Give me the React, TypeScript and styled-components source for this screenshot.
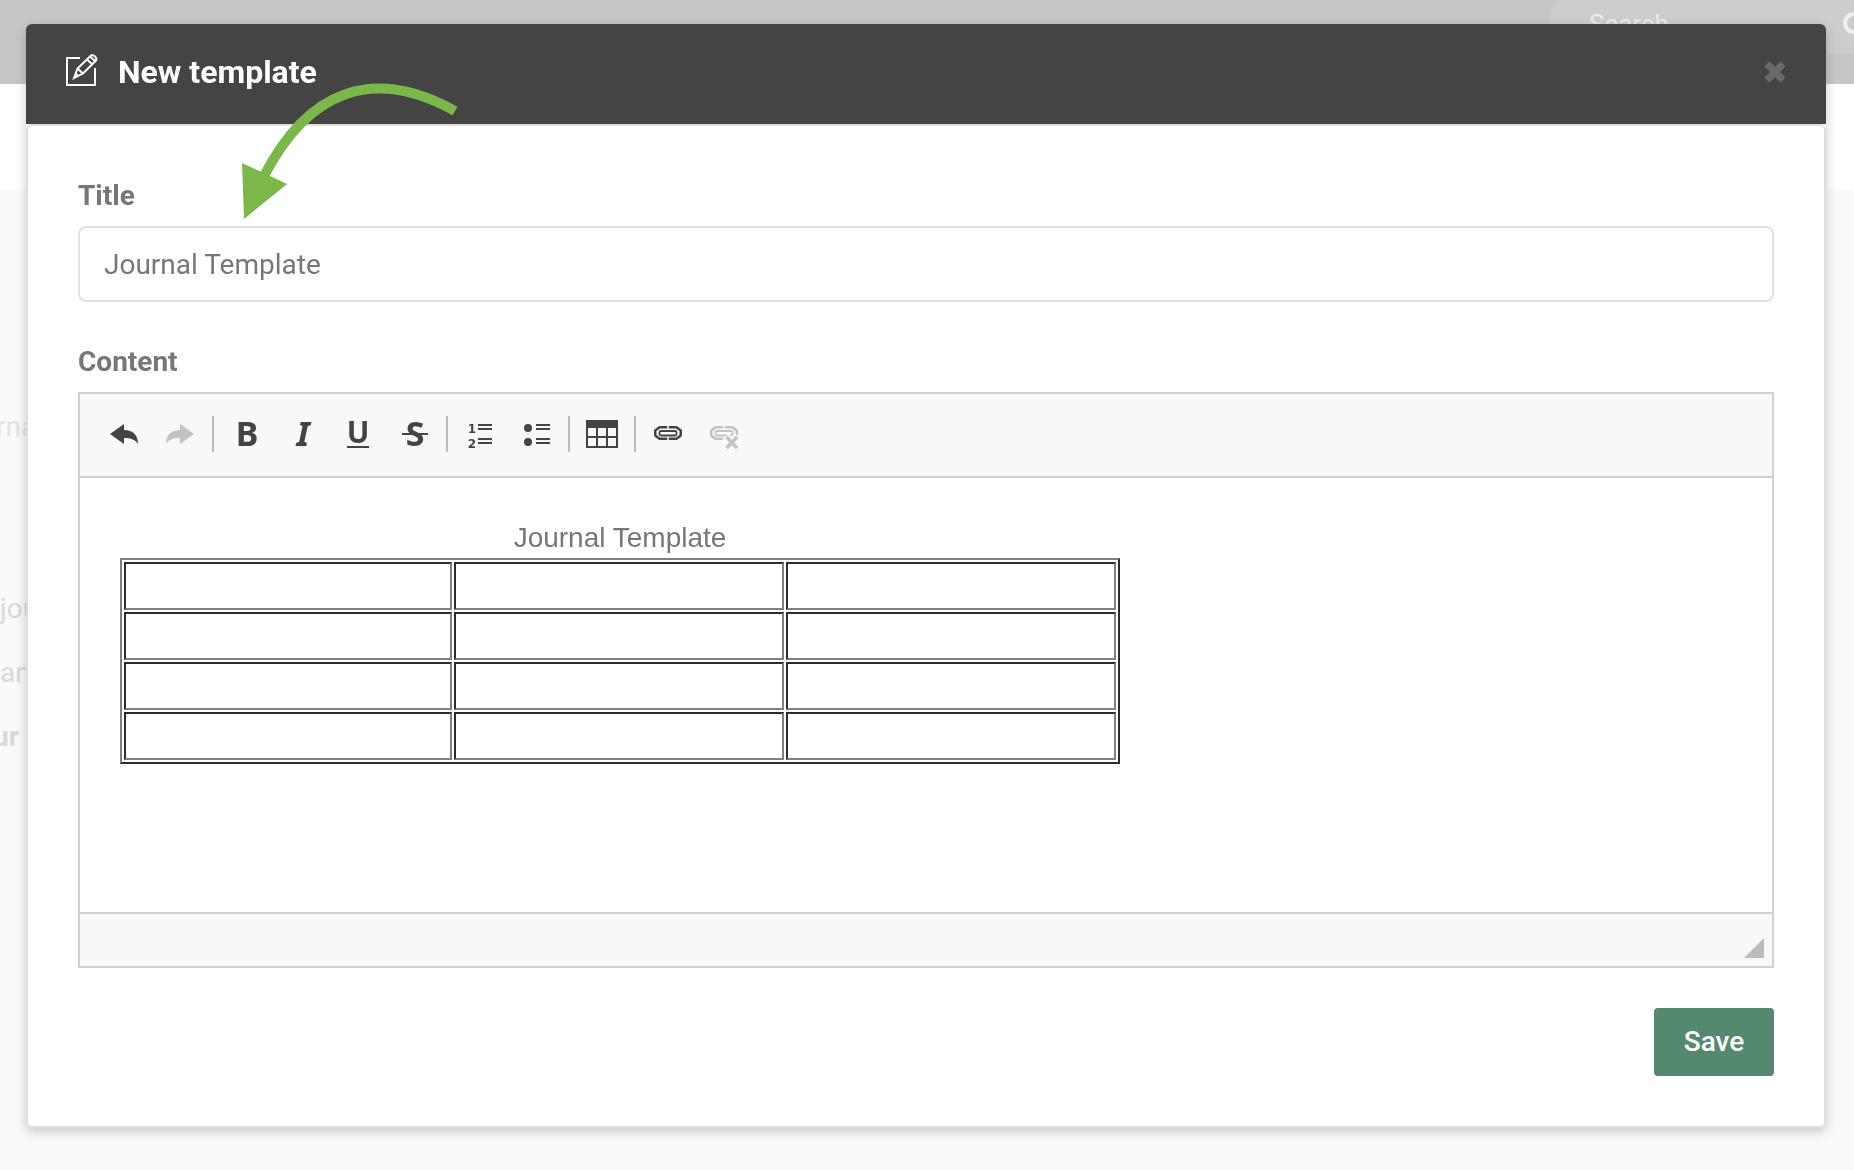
import React, { useState } from "react";
import styled, { createGlobalStyle } from "styled-components";

const GlobalStyle = createGlobalStyle`
  *, *::before, *::after { box-sizing: border-box; }
  html, body { margin: 0; height: 100%; overflow: hidden; }
  body {
    background: #f8fafc;
    color: #777;
    font: 28px/40px Roboto, "Liberation Sans", sans-serif;
  }
  button, input { font: inherit; }
`;

const TopBar = styled.header`
  display: flex;
  justify-content: flex-end;
  height: 84px;
  overflow: hidden;
  background: #c6c6c6;
`;

const SearchBox = styled.label`
  display: flex;
  align-items: center;
  justify-content: space-between;
  width: 304px;
  height: 64px;
  margin-top: -10px;
  padding: 4px 0 0 39px;
  border-radius: 32px 0 0 32px;
  background: #cdcdcd;
  color: #efefef;
  svg { flex: none; margin-right: -18px; }
`;

const SearchInput = styled.input`
  width: 200px;
  padding: 0;
  border: 0;
  background: transparent;
  font-size: 26px;
  &::placeholder { color: #ececec; opacity: 1; }
`;

const SubBar = styled.div`
  height: 106px;
  background: #fff;
`;

const Page = styled.main`
  display: flex;
  flex-direction: column;
  align-items: flex-start;
  padding-top: 217px;
`;

const PageText = styled.p<{ $gap?: number; $bold?: boolean; $faint?: boolean; $shift: number }>`
  margin: 0 0 ${(p) => p.$gap ?? 24}px -${(p) => p.$shift}px;
  color: ${(p) => (p.$faint ? "#e2e4e5" : "#d8d9d9")};
  font-weight: ${(p) => (p.$bold ? 700 : 400)};
  white-space: nowrap;
`;

const Overlay = styled.div`
  position: fixed;
  inset: 0;
  padding: 24px 28px 42px 26px;
`;

const Dialog = styled.section`
  position: relative;
  border-radius: 6px;
  box-shadow: 0 4px 12px rgba(0, 0, 0, 0.2);
`;

const DialogHeader = styled.header`
  display: flex;
  align-items: center;
  gap: 18px;
  height: 100px;
  padding: 0 35px 4px 38px;
  border-radius: 6px 6px 0 0;
  background: #444;
  color: #fff;
`;

const DialogTitle = styled.h1`
  flex: 1;
  margin: 0;
  font-size: 32px;
  line-height: 40px;
  font-weight: 700;
`;

const CloseButton = styled.button`
  display: flex;
  padding: 0;
  border: 0;
  background: none;
  color: #6a6a6a;
`;

const DialogBody = styled.form`
  display: flex;
  flex-direction: column;
  padding: 50px;
  border: 2px solid #dedede;
  border-radius: 6px;
  background: #fff;
`;

const FieldLabel = styled.label`
  margin-bottom: 10px;
  font-weight: 700;
`;

const TitleInput = styled.input`
  height: 76px;
  margin-bottom: 40px;
  padding: 0 24px;
  border: 2px solid #e2e2e2;
  border-radius: 8px;
  color: #777;
  outline: 0;
`;

const Editor = styled.div`
  border: 2px solid #d1d1d1;
`;

const Toolbar = styled.div`
  display: flex;
  align-items: center;
  padding: 22px 16px 24px;
  border-bottom: 2px solid #d1d1d1;
  background: #f8f8f8;
`;

const Tool = styled.button`
  display: flex;
  padding: 2px 12px;
  border: 0;
  background: none;
  color: #444;
  svg { overflow: visible; }
  &:disabled { color: #c3c3c3; }
`;

const Separator = styled.span`
  width: 2px;
  height: 36px;
  margin: 0 4px;
  background: #bcbcbc;
`;

const Canvas = styled.div`
  height: 434px;
  padding: 40px;
`;

const Grid = styled.table`
  width: 1000px;
  max-width: 100%;
  border: 2px solid;
  border-color: #808080 #2c2c2c #2c2c2c #808080;
  border-spacing: 2px;
  table-layout: fixed;
  caption {
    font: 28px/40px "Liberation Sans", Arial, sans-serif;
  }
  td {
    height: 48px;
    padding: 0;
    border: 2px solid;
    border-color: #2c2c2c #808080 #808080 #2c2c2c;
  }
  td:first-child { width: 328px; }
`;

const StatusBar = styled.div`
  display: flex;
  align-items: flex-end;
  justify-content: flex-end;
  height: 54px;
  padding: 8px;
  border-top: 2px solid #d1d1d1;
  background: #f8f8f8;
`;

const SaveButton = styled.button`
  align-self: flex-end;
  min-width: 120px;
  height: 68px;
  margin-top: 40px;
  padding: 0 24px;
  border: 0;
  border-radius: 4px;
  background: #55896f;
  color: #fff;
  font-weight: 500;
`;

const Arrow = styled.svg`
  position: absolute;
  top: 56px;
  left: 212px;
  pointer-events: none;
`;

const Glyph = ({ children }: { children: React.ReactNode }) => (
  <svg width="32" height="32" viewBox="0 0 32 32" fill="currentColor" aria-hidden="true">
    {children}
  </svg>
);

const SANS = '"Noto Sans", sans-serif';
const SMALL = '"DejaVu Sans", sans-serif';

const curvedArrow = "M2 16 L16 6 V12 C25 12 30 17 30 26 C27 21 22 20 16 20 V26 Z";

function Chain({ broken }: { broken?: boolean }) {
  return (
    <>
      <g fill="none" stroke="currentColor">
        <path
          strokeWidth="2.5"
          d="M15.200 9.250H7.500L3.250 12.500V17.500L7.500 20.750H15.200M16.800 9.250H24.500L28.750 12.500V17.500L24.500 20.750H16.800"
          strokeLinejoin="round"
        />
        <rect x="7.500" y="13" width="17" height="4.500" rx="1.500" strokeWidth="1.800" />
      </g>
      {broken && (
        <>
          <path d="M18 18l12 12M30 18l-12 12" stroke="#f8f8f8" strokeWidth="7" />
          <path d="M18.500 19l10.500 11M29 19l-10.500 11" stroke="currentColor" strokeWidth="3.500" />
        </>
      )}
    </>
  );
}

type ToolItem = { name: string; art: React.ReactNode; disabled?: boolean };

const groups: ToolItem[][] = [
  [
    { name: "Undo", art: <path d={curvedArrow} /> },
    { name: "Redo", art: <path d={curvedArrow} transform="matrix(-1 0 0 1 32 0)" />, disabled: true },
  ],
  [
    { name: "Bold", art: <text x="17" y="28" textAnchor="middle" fontFamily={SANS} fontWeight="700" fontSize="34">B</text> },
    { name: "Italic", art: <text x="17" y="28" textAnchor="middle" fontFamily={SANS} fontWeight="700" fontStyle="italic" fontSize="34">I</text> },
    {
      name: "Underline",
      art: (
        <>
          <text x="16" y="25" textAnchor="middle" fontFamily={SANS} fontWeight="700" fontSize="30">U</text>
          <rect x="5" y="28" width="22" height="2" />
        </>
      ),
    },
    {
      name: "Strikethrough",
      art: (
        <>
          <text x="17" y="28" textAnchor="middle" fontFamily={SANS} fontWeight="700" fontSize="34">S</text>
          <rect x="4" y="15" width="26" height="2" />
        </>
      ),
    },
  ],
  [
    {
      name: "Numbered list",
      art: (
        <>
          <text x="8" y="15" textAnchor="middle" fontFamily={SMALL} fontWeight="700" fontSize="12">1</text>
          <text x="8" y="30" textAnchor="middle" fontFamily={SMALL} fontWeight="700" fontSize="12">2</text>
          <path d="M14 6h14v2H14zM14 10h14v2H14zM14 20h14v2H14zM14 24h14v2H14z" />
        </>
      ),
    },
    {
      name: "Bulleted list",
      art: (
        <>
          <circle cx="8" cy="10" r="4" />
          <circle cx="8" cy="24" r="4" />
          <path d="M16 6h14v2H16zM16 10h14v2H16zM16 20h14v2H16zM16 24h14v2H16z" />
        </>
      ),
    },
  ],
  [
    {
      name: "Table",
      art: <path fillRule="evenodd" d="M0 2h32v28H0zM2 10v8h8v-8zM12 10v8h8v-8zM22 10v8h8v-8zM2 20v8h8v-8zM12 20v8h8v-8zM22 20v8h8v-8z" />,
    },
  ],
  [
    { name: "Link", art: <Chain /> },
    { name: "Unlink", art: <Chain broken />, disabled: true },
  ],
];

export default function App() {
  const [title, setTitle] = useState("Journal Template");
  return (
    <>
      <GlobalStyle />
      <TopBar>
        <SearchBox>
          <SearchInput aria-label="Search" placeholder="Search" />
          <svg width="30" height="30" viewBox="0 0 30 30" fill="none" stroke="currentColor" strokeWidth="4">
            <circle cx="12" cy="14" r="9" />
            <path d="M19 20l9 9" />
          </svg>
        </SearchBox>
      </TopBar>
      <SubBar />
      <Page>
        <PageText $faint $shift={4} $gap={142}>rna</PageText>
        <PageText $shift={0}>jou</PageText>
        <PageText $shift={0}>an</PageText>
        <PageText $bold $shift={7}>ur</PageText>
      </Page>

      <Overlay>
        <Dialog role="dialog" aria-labelledby="dialog-title">
          <DialogHeader>
            <svg width="36" height="36" viewBox="0 0 36 36" fill="none" stroke="currentColor" strokeWidth="2" aria-hidden="true">
              <path d="M16 4H3v27h28V14" />
              <path d="M10 24l3.500-9.500L26.500 2q2-2 4.500 0.500t0.500 4.500L19 19.500zM13.500 14.500l5.500 5M23 5.500l5.500 5M26 2.500l5.500 5M11.500 19.500l3 3" />
            </svg>
            <DialogTitle id="dialog-title">New template</DialogTitle>
            <CloseButton type="button" aria-label="Close">
              <svg width="32" height="32" viewBox="0 0 32 32" stroke="currentColor" strokeWidth="7">
                <path d="M8 8l16 16M24 8L8 24" />
              </svg>
            </CloseButton>
          </DialogHeader>
          <DialogBody onSubmit={(e) => e.preventDefault()}>
            <FieldLabel htmlFor="title">Title</FieldLabel>
            <TitleInput id="title" value={title} onChange={(e) => setTitle(e.target.value)} />
            <FieldLabel as="span" id="content-label">Content</FieldLabel>
            <Editor>
              <Toolbar role="toolbar" aria-label="Formatting">
                {groups.map((tools, i) => (
                  <React.Fragment key={i}>
                    {i > 0 && <Separator />}
                    {tools.map((tool) => (
                      <Tool key={tool.name} type="button" aria-label={tool.name} disabled={tool.disabled}>
                        <Glyph>{tool.art}</Glyph>
                      </Tool>
                    ))}
                  </React.Fragment>
                ))}
              </Toolbar>
              <Canvas role="group" aria-labelledby="content-label">
                <Grid>
                  <caption>Journal Template</caption>
                  <tbody>
                    {[0, 1, 2, 3].map((row) => (
                      <tr key={row}>
                        <td />
                        <td />
                        <td />
                      </tr>
                    ))}
                  </tbody>
                </Grid>
              </Canvas>
              <StatusBar>
                <svg width="20" height="20" viewBox="0 0 20 20" aria-hidden="true">
                  <path d="M20 0v20H0z" fill="#bcbcbc" />
                </svg>
              </StatusBar>
            </Editor>
            <SaveButton type="submit">Save</SaveButton>
          </DialogBody>
          <Arrow width="224" height="142" viewBox="0 0 224 142" aria-hidden="true">
            <path d="M25 98C70 9 136 -14 217 31" fill="none" stroke="#7ab84a" strokeWidth="10" />
            <path d="M4 83l45 21-43 35z" fill="#7ab84a" />
          </Arrow>
        </Dialog>
      </Overlay>
    </>
  );
}
